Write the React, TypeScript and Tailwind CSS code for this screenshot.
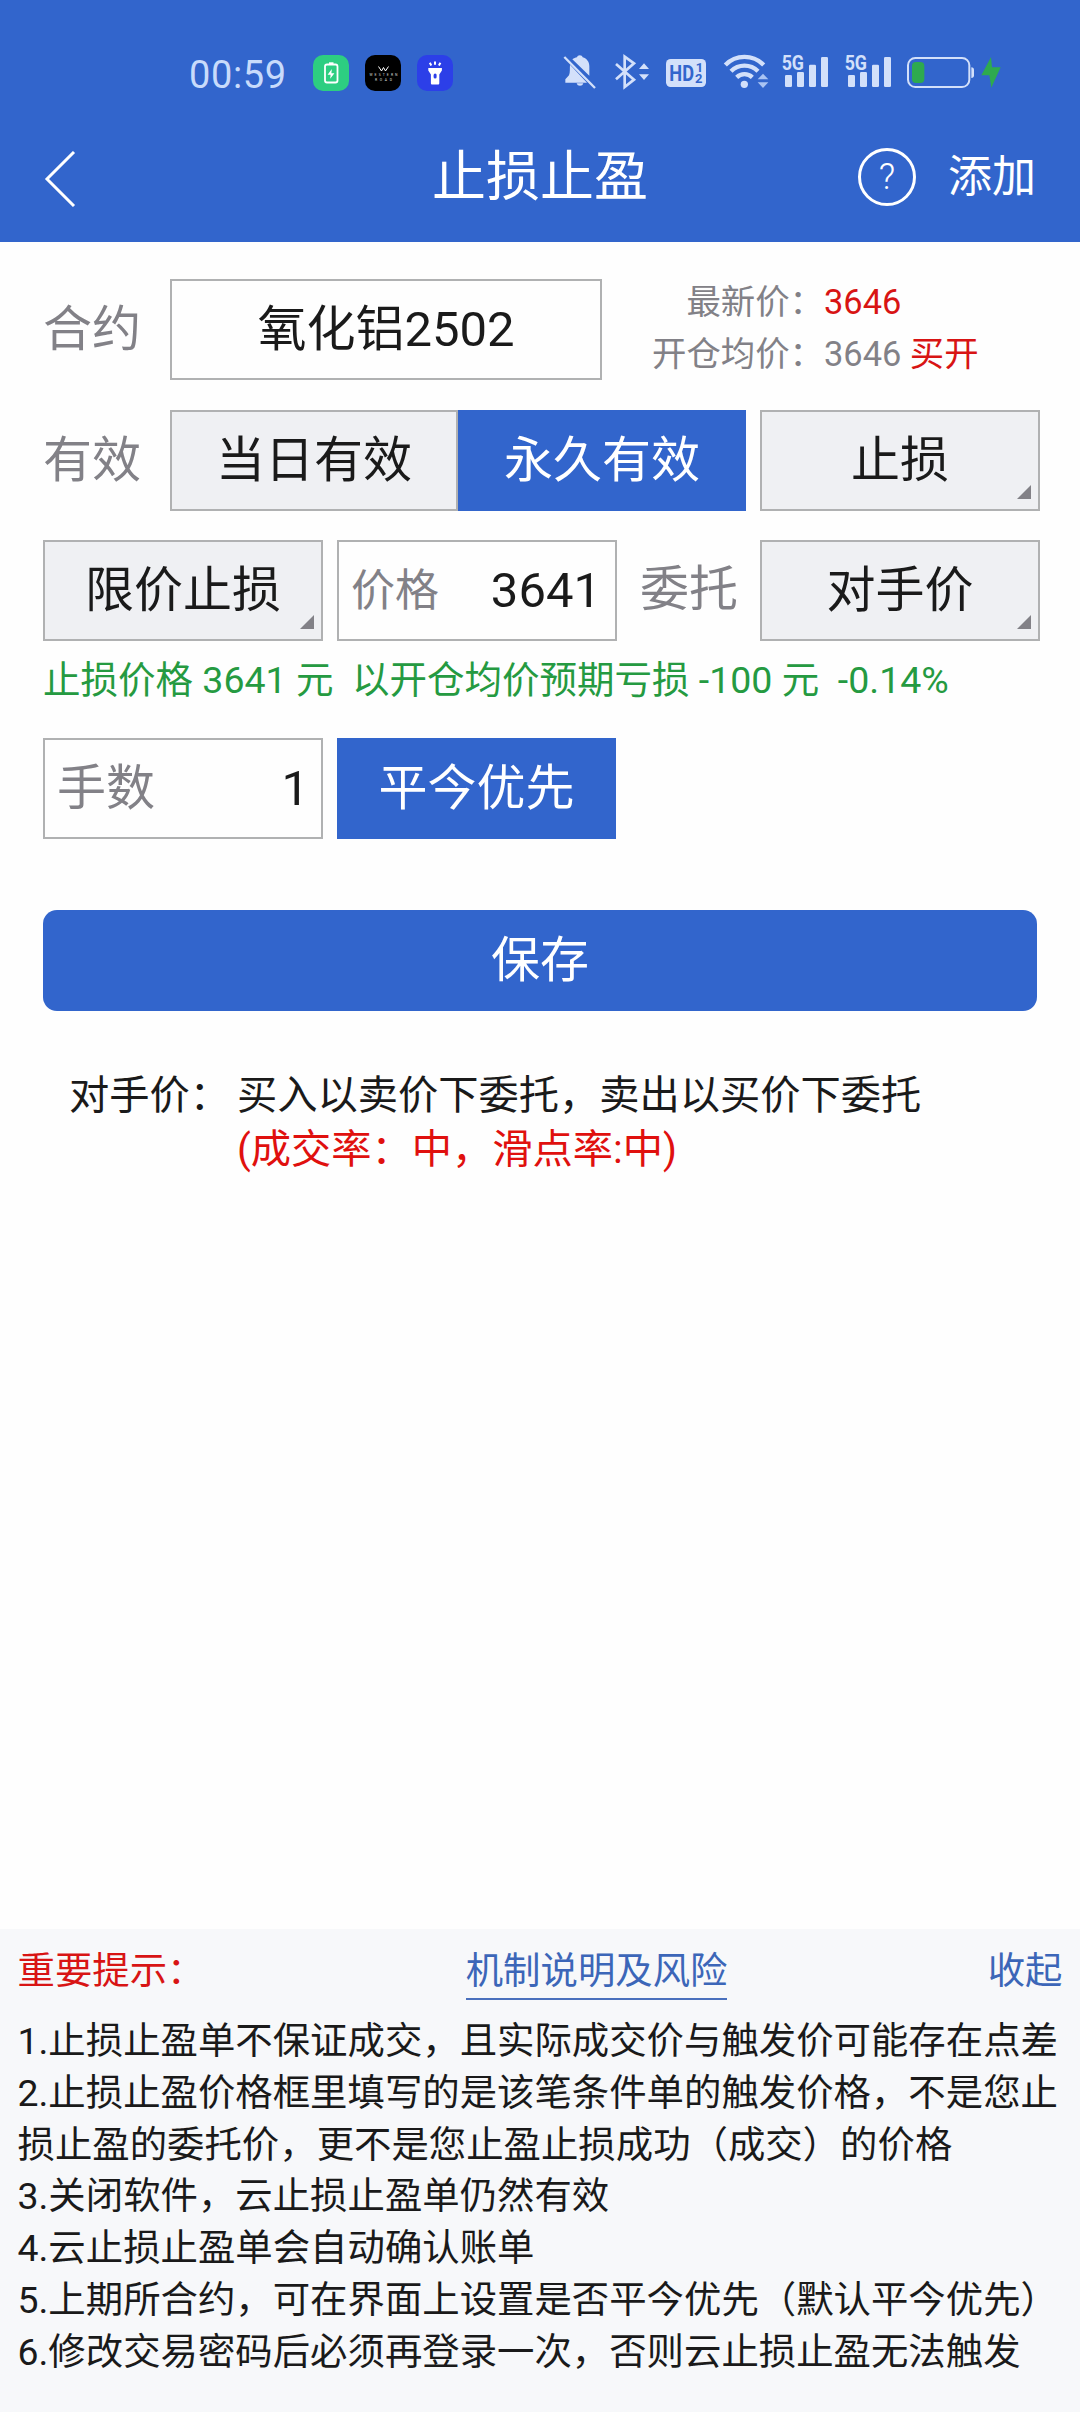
import type { ReactNode } from "react";
import clsx from "clsx";

const notices = [
  "1.止损止盈单不保证成交，且实际成交价与触发价可能存在点差",
  "2.止损止盈价格框里填写的是该笔条件单的触发价格，不是您止损止盈的委托价，更不是您止盈止损成功（成交）的价格",
  "3.关闭软件，云止损止盈单仍然有效",
  "4.云止损止盈单会自动确认账单",
  "5.上期所合约，可在界面上设置是否平今优先（默认平今优先）",
  "6.修改交易密码后必须再登录一次，否则云止损止盈无法触发",
];

function Signal({ className }: { className?: string }) {
  return (
    <svg viewBox="723 72 144 108" className={clsx("h-9 w-12 overflow-visible", className)} fill="currentColor">
      <text x="725" y="121" fontSize="62" fontWeight="700" textLength="67" lengthAdjust="spacingAndGlyphs">
        5G
      </text>
      <rect x="735" y="135" width="21" height="36" rx="4" />
      <rect x="771" y="126" width="21" height="45" rx="4" />
      <rect x="807" y="104" width="21" height="67" rx="4" />
      <rect x="843" y="81" width="21" height="90" rx="4" />
    </svg>
  );
}

function StatusBar() {
  return (
    <div className="flex h-[110px] items-start pl-[189px] pt-[54px] text-[#d3e0fa]">
      <span className="w-[124px] pt-0.5 text-[38px] leading-[38px] tracking-[0.6px] text-[#c8dbfb]">00:59</span>

      {/* Running apps */}
      <div className="flex gap-4 pt-px">
        <svg viewBox="0 0 36 36" className="size-9">
          <rect width="36" height="36" rx="10" fill="#2dce81" />
          <rect x="12" y="9.5" width="12.5" height="18" rx="2" fill="none" stroke="#fff" strokeWidth="1.8" />
          <path d="M16 7.3h4.5v2H16z" fill="#fff" />
          <path d="M18.8 14l-4.2 5.8h3l-.4 4 4.2-5.6h-3z" fill="#fff" />
        </svg>
        <svg viewBox="0 0 36 36" className="size-9">
          <rect width="36" height="36" rx="10" fill="#000" />
          <path d="M13.500 11.500l3 4.500 2-3.500 2 3.500 3-4.500" fill="none" stroke="#fff" strokeWidth="1" />
          <text x="4.5" y="21.3" fontSize="3.4" fill="#ddd" textLength="28">WESTERN</text>
          <text x="10" y="25.6" fontSize="3.4" fill="#ddd" textLength="17">ROAD</text>
        </svg>
        <svg viewBox="0 0 36 36" className="size-9">
          <rect width="36" height="36" rx="10" fill="#2c3fe8" />
          <path d="M11.3 13h13.6v2.5l-2.6 4V28c0 1-.5 1.5-1.4 1.5h-5.6c-.9 0-1.4-.5-1.4-1.5v-8.5l-2.6-4z" fill="#fff" />
          <rect x="16.6" y="18.6" width="3" height="5" rx="1.5" fill="#2c3fe8" />
          <path d="M18 6.500v3.200M12.800 7.800l1.500 2.600M23.400 7.800l-1.500 2.600" stroke="#fff" strokeWidth="2" />
        </svg>
      </div>

      {/* System icons */}
      <div className="ml-[109px] flex">
        <svg viewBox="66 72 105 108" className="h-9 w-[35px]" fill="currentColor">
          <path d="M97 88c5-4 9-5 14-6 1-8 16-8 17 0 13 4 20 14 20 27v28zM90 104l51 54H76v-10l11-12c4-9 2-21 3-32zM110 160h20c-2 10-18 10-20 0z" />
          <path d="M73 81l92 93" stroke="currentColor" strokeWidth="7" />
        </svg>
        <svg viewBox="222 72 108 108" className="ml-[17px] h-9 w-9">
          <path d="M228 102l54 47-28 22V80l28 20-54 48" fill="none" stroke="currentColor" strokeWidth="8" />
          <path d="M297 117h30l-15-17zM297 133h30l-15 17z" fill="currentColor" />
        </svg>
        <svg viewBox="378 72 120 108" className="ml-4 h-9 w-10" fill="#3265cc">
          <rect x="378" y="87" width="120" height="84" rx="14" fill="currentColor" />
          <text x="388" y="153" fontSize="66" fontWeight="700" textLength="74" lengthAdjust="spacingAndGlyphs">HD</text>
          <text x="467" y="126" fontSize="39" fontWeight="700">1</text>
          <text x="465" y="160" fontSize="39" fontWeight="700">2</text>
        </svg>
        <svg viewBox="549 72 138 108" className="ml-[17px] h-9 w-[46px]">
          <g fill="none" stroke="currentColor" strokeWidth="13">
            <path d="M556 105a80 80 0 0 1 115 0" />
            <path d="M573 124a57 57 0 0 1 81 0" />
            <path d="M590 142a34 34 0 0 1 47 0" />
          </g>
          <circle cx="613" cy="163" r="11" fill="currentColor" />
          <path d="M653 148h32l-16-17zM653 157h32l-16 17z" fill="#a9c3f3" />
        </svg>
        <Signal className="ml-3" />
        <Signal className="ml-[15px]" />
        <svg viewBox="1101 72 201 108" className="ml-[15px] h-9 w-[67px]">
          <rect x="1104" y="84" width="184" height="87" rx="22" fill="none" stroke="currentColor" strokeWidth="6" />
          <path d="M1294 112q8 0 8 8v16q0 8-8 8z" fill="currentColor" />
          <rect x="1116" y="96" width="37" height="63" rx="12" fill="#2eaa4f" />
        </svg>
        <svg viewBox="1323 72 60 108" className="ml-[7px] h-9 w-5" fill="#2eaa4f">
          <path d="M1353 81l-29 55h24l6 37 28-61h-26z" />
        </svg>
      </div>
    </div>
  );
}

function TitleBar() {
  return (
    <div className="flex h-[132px] items-center justify-between px-11 text-white">
      <svg viewBox="0 0 32 56" className="mt-1.5 h-14 w-8" fill="none" stroke="currentColor" strokeWidth="3">
        <path d="M30 1L3 28l27 27" />
      </svg>
      <h1 className="ml-[146px] mt-1 text-[54px] leading-[70px]">止损止盈</h1>
      <div className="flex items-center gap-8">
        <span className="mt-0.5 flex size-[58px] items-center justify-center rounded-full border-[3px] border-white text-[36px] font-light leading-none">
          ?
        </span>
        <span className="mt-0.5 text-[44px] leading-[60px]">添加</span>
      </div>
    </div>
  );
}

type BoxProps = {
  children: ReactNode;
  className?: string;
  active?: boolean;
  filled?: boolean;
  menu?: boolean;
};

function Box({ children, className, active, filled, menu }: BoxProps) {
  return (
    <div
      className={clsx(
        "relative flex h-[101px] items-center justify-center",
        active ? "bg-[#3265cc] text-white" : "border-2 border-[#b0b1b2]",
        filled && "bg-[#eff0f3]",
        className
      )}
    >
      {children}
      {menu && (
        <svg viewBox="0 0 14 14" className="absolute bottom-2.5 right-[7px] size-3.5" fill="#828187">
          <path d="M14 0v14H0z" />
        </svg>
      )}
    </div>
  );
}

function OrderForm() {
  return (
    <section className="flex flex-col pl-[43px] pr-10 pt-[37px] text-[49px] leading-[60px]">
      <div className="flex h-[101px]">
        <span className="w-[127px] pt-[21px] text-[#828187]">合约</span>
        <Box className="w-[432px]">氧化铝2502</Box>
        <div className="-mt-[3px] ml-[50px] flex flex-col text-[34.4px] leading-[52px] text-[#828187]">
          <div className="flex">
            <span className="w-[172px] text-right">最新价：</span>
            <span className="text-[#d81414]">3646</span>
          </div>
          <div className="flex whitespace-pre">
            <span className="w-[172px] text-right">开仓均价：</span>
            <span>3646 </span>
            <span className="text-[#d81414]">买开</span>
          </div>
        </div>
      </div>

      <div className="mt-[30px] flex">
        <span className="w-[127px] pt-[21px] text-[#828187]">有效</span>
        <Box filled className="w-[288px]">当日有效</Box>
        <Box active className="w-[288px]">永久有效</Box>
        <Box filled menu className="ml-3.5 w-[280px]">止损</Box>
      </div>

      <div className="mt-[29px] flex">
        <Box filled menu className="w-[280px]">限价止损</Box>
        <Box className="ml-3.5 w-[280px]">
          <span className="flex-1 pl-3 text-[44px] text-[#828187]">价格</span>
          <span className="pr-3.5">3641</span>
        </Box>
        <span className="w-[143px] pl-[23px] pt-5 text-[#828187]">委托</span>
        <Box filled menu className="w-[280px]">对手价</Box>
      </div>

      <p className="mt-[13px] h-[84px] whitespace-pre text-[37.5px] leading-[52px] text-[#259a41]">
        止损价格 3641 元  以开仓均价预期亏损 -100 元  -0.14%
      </p>

      <div className="flex">
        <Box className="w-[280px]">
          <span className="flex-1 pl-3 text-[#828187]">手数</span>
          <span className="pr-3">1</span>
        </Box>
        <Box active className="ml-3.5 w-[279px]">平今优先</Box>
      </div>

      <button className="mr-[3px] mt-[71px] h-[101px] rounded-[14px] bg-[#3265cc] text-white">保存</button>

      <div className="mt-[58px] flex pl-[26px] text-[40.25px] leading-[54px]">
        <span className="w-[168px]">对手价：</span>
        <p>
          买入以卖价下委托，卖出以买价下委托
          <br />
          <span className="text-[#e0100e]">(成交率：中，滑点率:中)</span>
        </p>
      </div>
    </section>
  );
}

export default function App() {
  return (
    <main className="flex h-[2412px] w-[1080px] flex-col overflow-hidden bg-[#fefefe] font-['Roboto','Noto_Sans_CJK_SC',sans-serif] text-[#1a1a1a]">
      <header className="bg-[#3265cc]">
        <StatusBar />
        <TitleBar />
      </header>

      <OrderForm />

      <footer className="mt-auto h-[483px] bg-[#f7f8fa] px-[17.5px] pt-[17px] text-[37.4px] leading-[51.8px]">
        <div className="flex justify-between text-[#3c66b8]">
          <span className="w-[262px] text-[#d81414]">重要提示：</span>
          <a className="mr-[74px] h-[54px] border-b-2 border-[#4a70bd]">机制说明及风险</a>
          <span>收起</span>
        </div>
        <div className="mt-4">
          {notices.map((notice) => (
            <p key={notice}>{notice}</p>
          ))}
        </div>
      </footer>
    </main>
  );
}
